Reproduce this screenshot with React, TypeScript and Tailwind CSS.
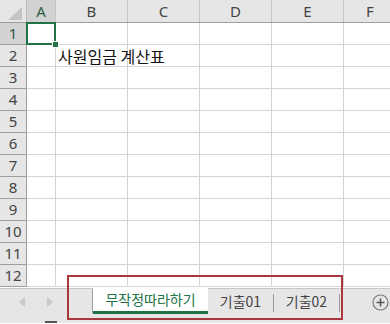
const COLS = [
  { id: "A", w: "w-[29px]" },
  { id: "B", w: "w-[72px]" },
  { id: "C", w: "w-[72px]" },
  { id: "D", w: "w-[72px]" },
  { id: "E", w: "w-[72px]" },
];

const ROWS = Array.from({ length: 12 }, (_, i) => i + 1);

function HeaderRow() {
  return (
    <div className="flex h-[23px] shrink-0 border-b border-[#9e9e9e] bg-[#e6e6e6]">
      <div className="relative w-[27px] shrink-0 border-r border-[#bcbcbc]">
        <svg className="absolute left-[8px] top-[7px]" width="15" height="13" viewBox="0 0 15 13">
          <polygon points="14,0 14,13 0,13" fill="#c4c4c4" />
        </svg>
      </div>
      {COLS.map((c) => (
        <div
          key={c.id}
          className={`${c.w} shrink-0 border-r border-[#c6c6c6] flex items-center justify-center text-[15px] ${c.id === "A" ? "bg-[#d2d2d2] text-[#2d5a42]" : "text-[#444]"}`}
        >
          {c.id}
        </div>
      ))}
      <div className="flex-1 pl-[22px] flex items-center text-[15px] text-[#444]">F</div>
    </div>
  );
}

function Row({ n }: { n: number }) {
  return (
    <div className="flex h-[22px] shrink-0">
      <div
        className={`w-[27px] shrink-0 border-r border-b border-[#9e9e9e] flex items-center justify-center text-[15px] ${n === 1 ? "bg-[#d2d2d2] text-[#2d5a42]" : "bg-[#e6e6e6] text-[#444]"}`}
      >
        {n}
      </div>
      {COLS.map((c) => (
        <div key={c.id} className={`${c.w} shrink-0 relative border-r border-b border-[#d4d4d4]`}>
          {n === 1 && c.id === "A" && (
            <div className="absolute -left-[1px] -top-[1px] -right-[1px] -bottom-[1px] z-10 border-2 border-[#217346]">
              <div className="absolute -right-[5px] -bottom-[5px] w-[7px] h-[7px] bg-[#217346] border border-white" />
            </div>
          )}
          {n === 2 && c.id === "B" && (
            <span className="absolute left-[2px] top-0 whitespace-nowrap text-[16px] leading-[22px] text-[#111] font-['Noto_Sans_CJK_KR',sans-serif]">
              사원임금 계산표
            </span>
          )}
        </div>
      ))}
      <div className="flex-1 border-b border-[#d4d4d4]" />
    </div>
  );
}

function TabBar() {
  return (
    <div className="relative flex h-[35px] shrink-0 bg-[#e6e6e6] border-t border-[#c6c6c6] mt-[1px]">
      <div className="w-[93px] shrink-0 flex items-start pt-[8px] gap-[22px] pl-[19px] border-r border-[#9e9e9e] h-[24px]">
        <svg width="6" height="10" viewBox="0 0 6 10"><polygon points="6,0 6,10 0,5" fill="#c8c8c8" /></svg>
        <svg width="6" height="10" viewBox="0 0 6 10"><polygon points="0,0 0,10 6,5" fill="#c8c8c8" /></svg>
      </div>
      <div className="-mt-[1px] w-[115px] h-[26px] shrink-0 bg-white border-b-[3px] border-[#217346] flex items-center justify-center text-[14px] text-[#217346] font-['Noto_Sans_CJK_KR',sans-serif]">
        무작정따라하기
      </div>
      <div className="w-[66px] h-[24px] shrink-0 flex items-center justify-center">
        <span className="flex-1 text-center text-[14px] text-[#444] font-['Noto_Sans_CJK_KR',sans-serif]">기출01</span>
        <span className="w-px h-[18px] bg-[#9a9a9a] mt-[4px]" />
      </div>
      <div className="w-[66px] h-[24px] shrink-0 flex items-center justify-center">
        <span className="flex-1 text-center text-[14px] text-[#444] font-['Noto_Sans_CJK_KR',sans-serif]">기출02</span>
        <span className="w-px h-[18px] bg-[#9a9a9a] mt-[4px]" />
      </div>
      <div className="flex-1 flex justify-end pr-[1px] pt-[5px]">
        <svg width="17" height="17" viewBox="0 0 17 17">
          <circle cx="8.5" cy="8.5" r="7.5" fill="none" stroke="#7a7a7a" strokeWidth="1.2" />
          <path d="M8.5 4.5v8M4.5 8.5h8" stroke="#5a5a5a" strokeWidth="1.6" />
        </svg>
      </div>
      <div className="absolute left-[45px] bottom-0 w-[12px] h-[2px] bg-[#555]" />
    </div>
  );
}

export default function App() {
  return (
    <div className="relative w-[390px] h-[324px] overflow-hidden bg-white flex flex-col font-['Noto_Sans','Liberation_Sans',sans-serif]">
      <HeaderRow />
      {ROWS.map((n) => (
        <Row key={n} n={n} />
      ))}
      <TabBar />
      <div className="absolute left-[67px] top-[275px] w-[276px] h-[45px] border-2 border-[#a8383d] z-20 pointer-events-none" />
    </div>
  );
}
